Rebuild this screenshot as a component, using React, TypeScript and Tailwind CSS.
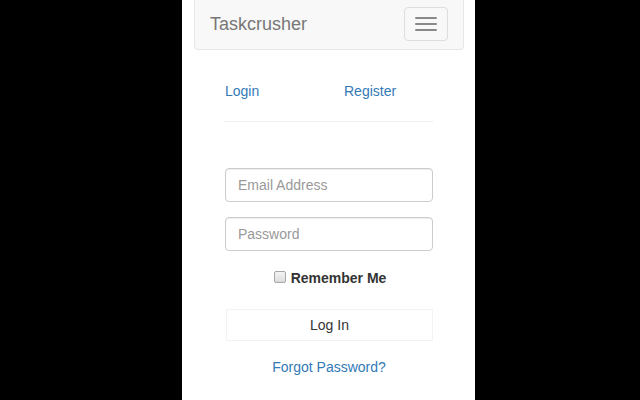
export default function App() {
  return (
    <div className="min-h-[400px] w-[640px] bg-black font-['Liberation_Sans',Arial,sans-serif] text-[14px] leading-[20px] text-[#333]">
      <div className="ml-[182px] min-h-[400px] w-[293px] bg-white">
        {/* Navbar */}
        <nav className="ml-[12px] mr-[11px] flex h-[50px] items-start justify-between rounded-b-[4px] border border-t-0 border-[#e7e7e7] bg-[#f8f8f8] pl-[15px] pr-[15px]">
          <span className="mt-[14px] text-[18px] leading-[20px] text-[#777]">Taskcrusher</span>
          <button className="mt-[7px] flex h-[34px] w-[44px] flex-col items-center justify-center gap-[4px] rounded-[4px] border border-[#ddd]">
            <span className="block h-[2px] w-[22px] rounded-[1px] bg-[#888]" />
            <span className="block h-[2px] w-[22px] rounded-[1px] bg-[#888]" />
            <span className="block h-[2px] w-[22px] rounded-[1px] bg-[#888]" />
          </button>
        </nav>

        <div className="ml-[43px] w-[208px]">
          {/* Tabs */}
          <div className="mt-[31px] flex">
            <a className="w-[119px] text-[#337ab7]">Login</a>
            <a className="text-[#337ab7]">Register</a>
          </div>
          <div className="mt-[20px] -ml-[1px] h-px w-[209px] bg-[#eee]" />

          {/* Form */}
          <div className="mt-[46px] flex flex-col">
            <input
              placeholder="Email Address"
              className="h-[34px] w-[208px] rounded-[4px] border border-[#ccc] px-[12px] text-[14px] text-[#555] shadow-[inset_0_1px_1px_rgba(0,0,0,0.075)] outline-none placeholder:text-[#999]"
            />
            <input
              type="password"
              placeholder="Password"
              className="mt-[15px] h-[34px] w-[208px] rounded-[4px] border border-[#ccc] px-[12px] text-[14px] text-[#555] shadow-[inset_0_1px_1px_rgba(0,0,0,0.075)] outline-none placeholder:text-[#999]"
            />
            <label className="mt-[17px] ml-[2px] flex items-center justify-center gap-[5px] font-bold">
              <input
                type="checkbox"
                className="m-0 -mt-[2px] h-[12px] w-[12px] appearance-none rounded-[2px] border border-[#a8a8a8] bg-gradient-to-b from-[#f4f4f4] to-[#dcdcdc]"
              />
              <span>Remember Me</span>
            </label>
            <button className="mt-[21px] ml-[1px] h-[32px] w-[207px] border border-[#f3f3f3] bg-white text-[14px] text-[#333]">
              Log In
            </button>
            <a className="mt-[16px] text-center text-[#337ab7]">Forgot Password?</a>
          </div>
        </div>
      </div>
    </div>
  );
}
